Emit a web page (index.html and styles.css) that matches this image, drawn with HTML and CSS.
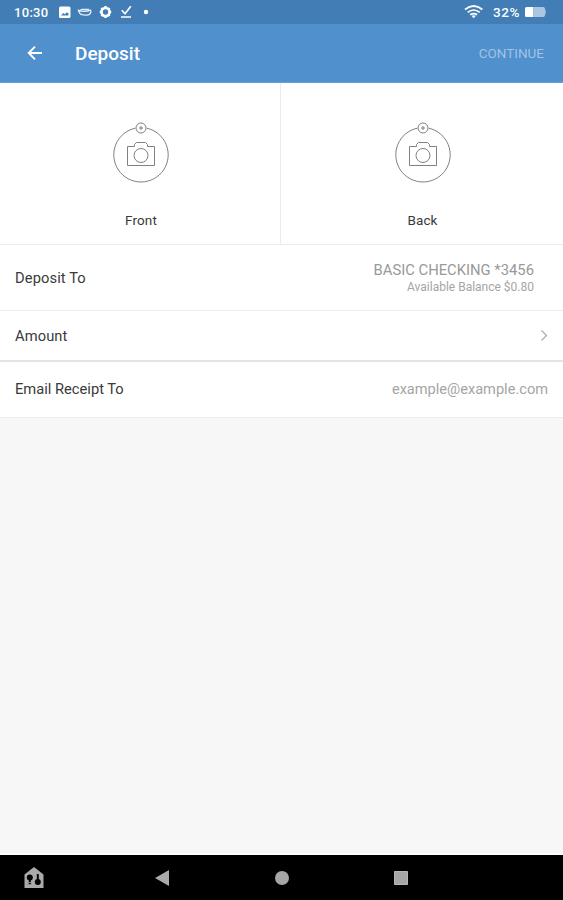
FILE: index.html
```html
<!DOCTYPE html>
<html lang="en">
<head>
<meta charset="utf-8">
<title>Deposit</title>
<link rel="stylesheet" href="styles.css">
</head>
<body>
<div class="status">
  <span class="clock">10:30</span>
  <svg class="notifications" width="92" height="24" viewBox="58 0 92 24">
    <path fill="#fff" fill-rule="evenodd" d="M60.5 6.500h8.500a1.500 1.500 0 0 1 1.500 1.500v8.500a1.500 1.500 0 0 1-1.500 1.500h-8.500a1.500 1.500 0 0 1-1.500-1.500v-8.500a1.500 1.500 0 0 1 1.500-1.500zM61 15.500h7.500v-2l-1.700-1.200-1.800 1.900-1.700-1.200z"/>
    <path fill="none" stroke="#e4eef8" stroke-width="1.300" d="M78.500 10.300c2.500 1.400 8.500 1.600 12-.2l.4 1.500c-.3 1.900-1.400 3.100-3 3.200-2 .3-4.500.3-6.200-.2-1.800-.6-2.700-2.200-3.200-4.300zM80 10.300l2-.8h7"/>
    <path fill="none" stroke="#fff" stroke-width="2.600" d="M105.500 8a4 4 0 1 1 0 8 4 4 0 0 1 0-8z"/>
    <path stroke="#fff" stroke-width="2.400" d="M105.500 6v2M105.500 16v2M99.800 12h2M109.200 12h2M101.400 8l1.400 1.400M108.200 14.600l1.400 1.400M101.400 16l1.400-1.400M108.200 9.400l1.400-1.400"/>
    <path fill="none" stroke="#fff" stroke-width="1.700" d="M121.800 10.300l3.200 3.500 5.800-7.600M121 17h10"/>
    <circle cx="146" cy="12" r="2.200" fill="#fff"/>
  </svg>
  <svg class="wifi" width="20" height="24" viewBox="464 0 20 24">
    <path fill="none" stroke="#fff" stroke-width="1.700" d="M465 9.500q8.700-7 17.400 0M467.700 12.300q6-4.600 12 0M470.300 14.800q3.400-2.500 6.800 0"/>
    <path fill="#fff" d="M471.700 16l2 2.300 2-2.300q-2-1.300-4 0z"/>
  </svg>
  <span class="percent">32%</span>
  <svg class="battery" width="22" height="24" viewBox="524 0 22 24">
    <path fill="#a9c6e2" d="M534 7h9a2 2 0 0 1 2 2q1.500 3 0 6a2 2 0 0 1-2 2h-9z"/>
    <path fill="#fff" d="M526.500 7h7v10h-7a1.500 1.500 0 0 1-1.500-1.500v-7a1.500 1.500 0 0 1 1.500-1.500z"/>
  </svg>
</div>
<header class="bar">
  <svg class="back" width="16" height="16" viewBox="0 0 16 16"><path fill="none" stroke="#fff" stroke-width="1.900" d="M15 8H2M8 1.700L1.700 8 8 14.300"/></svg>
  <h1>Deposit</h1>
  <span class="continue">CONTINUE</span>
</header>
<main>
  <section class="photos">
    <div class="photo">
      <svg width="58" height="62" viewBox="0 0 58 62" fill="none" stroke="#808080" stroke-width="1">
        <path d="M23.300 6.200A27.200 27.200 0 1 0 34.700 6.200"/>
        <circle cx="29" cy="6" r="5"/><path d="M27 6h4M29 4v4"/>
        <path d="M15.500 24.500h7v-2l2-2h9l2 2v2h7v19h-27z"/><circle cx="29" cy="33.500" r="7"/>
      </svg>
      <span class="front">Front</span>
    </div>
    <div class="photo">
      <svg width="58" height="62" viewBox="0 0 58 62" fill="none" stroke="#808080" stroke-width="1">
        <path d="M23.300 6.200A27.200 27.200 0 1 0 34.700 6.200"/>
        <circle cx="29" cy="6" r="5"/><path d="M27 6h4M29 4v4"/>
        <path d="M15.500 24.500h7v-2l2-2h9l2 2v2h7v19h-27z"/><circle cx="29" cy="33.500" r="7"/>
      </svg>
      <span class="rear">Back</span>
    </div>
  </section>
  <div class="row deposit">
    <span class="label to">Deposit To</span>
    <div class="account"><span class="name">BASIC CHECKING *3456</span><span class="balance">Available Balance $0.80</span></div>
  </div>
  <div class="row amount">
    <span class="label amt">Amount</span>
    <svg width="8" height="12" viewBox="0 0 8 12"><path fill="none" stroke="#aaa" stroke-width="1.200" d="M1.500.5l5 5-5 5"/></svg>
  </div>
  <div class="row receipt">
    <span class="label mail">Email Receipt To</span>
    <span class="email">example@example.com</span>
  </div>
</main>
<nav class="nav">
  <svg width="20" height="22" viewBox="0 0 20 22"><path fill="#aaa" d="M10 0l9.500 7.500V21H.5V7.500z"/><path stroke="#000" stroke-width="2" d="M5.800 10v8M13.800 7v8"/><circle cx="5.800" cy="10.500" r="3"/><circle cx="13.800" cy="15" r="3"/><path stroke="#888" d="M3.500 15.500h4M3.500 17.500h4"/></svg>
  <svg width="14" height="16" viewBox="0 0 14 16"><path fill="#aaa" d="M14 0v16L0 8z"/></svg>
  <svg width="14" height="14" viewBox="0 0 14 14"><circle cx="7" cy="7" r="7" fill="#a6a6a6"/></svg>
  <svg width="14" height="14" viewBox="0 0 14 14"><path fill="#a6a6a6" stroke="#b6b6b6" d="M.5.500h13v13H.5z"/></svg>
</nav>
</body>
</html>
```
FILE: styles.css
```css
* { box-sizing: border-box; }
body {
  margin: 0;
  width: 563px;
  height: 900px;
  display: flex;
  flex-direction: column;
  overflow: hidden;
  background: #f7f7f7;
  font-family: Roboto, "Liberation Sans", sans-serif;
  color: #3a3a3a;
  white-space: nowrap;
}
svg { display: block; flex: none; }
.status {
  height: 24px;
  flex: none;
  display: flex;
  align-items: center;
  padding: 0 16px 0 14px;
  background: #427eb5;
  color: #fff;
  font-weight: 500;
  font-size: 13px;
}
.clock { width: 44px; letter-spacing: 0.3px; }
.wifi { margin-left: auto; }
.percent { width: 28px; margin: 0 3px 0 9px; font-size: 13.5px; letter-spacing: 0.6px; }
.battery { margin-right: 1px; }
.bar {
  height: 59px;
  flex: none;
  display: flex;
  align-items: center;
  padding: 0 19px 0 27px;
  background: #4f90cd;
  border-bottom: 1px solid #6ba1d5;
  color: #fff;
}
h1 { margin: 1px 0 0 32px; font-size: 19px; font-weight: 500; }
.continue { margin-left: auto; color: #a0c3e6; font-size: 13.5px; }
main { flex: 1; }
.photos {
  display: grid;
  grid-template-columns: 281px 282px;
  height: 162px;
  background: #fff;
  border-bottom: 1px solid #ebebeb;
}
.photo {
  display: flex;
  flex-direction: column;
  align-items: center;
  padding: 39px 0 0 2px;
  font-size: 13.5px;
  line-height: 16px;
}
.photo:first-child { border-right: 1px solid #ebebeb; }
.photo span { margin-top: 28px; letter-spacing: 0.1px; }
.photo .rear { margin-right: 1px; }
.row {
  display: flex;
  align-items: center;
  justify-content: space-between;
  padding: 0 15px;
  background: #fff;
  border-bottom: 1px solid #ececec;
}
.label { font-size: 14.7px; }
.amt, .to { letter-spacing: 0.1px; }
.deposit { height: 66px; }
.amount { height: 51px; border-bottom: 2px solid #e4e4e4; }
.receipt { height: 56px; padding-bottom: 2px; }
.account { display: flex; flex-direction: column; align-items: flex-end; margin: 1px 14px 0 0; color: #999; }
.name { font-size: 14.8px; line-height: 18px; }
.balance { font-size: 12px; line-height: 17px; color: #a5a5a5; }
.email { color: #a5a5a5; font-size: 14.6px; }
.nav {
  height: 47px;
  flex: none;
  display: flex;
  align-items: center;
  border-top: 2px solid #fff;
  background: #000;
  padding: 0 0 0 24px;
}
.nav svg:nth-child(2) { margin-left: 111px; }
.nav svg:nth-child(3) { margin-left: 106px; }
.nav svg:nth-child(4) { margin-left: 105px; }
```
